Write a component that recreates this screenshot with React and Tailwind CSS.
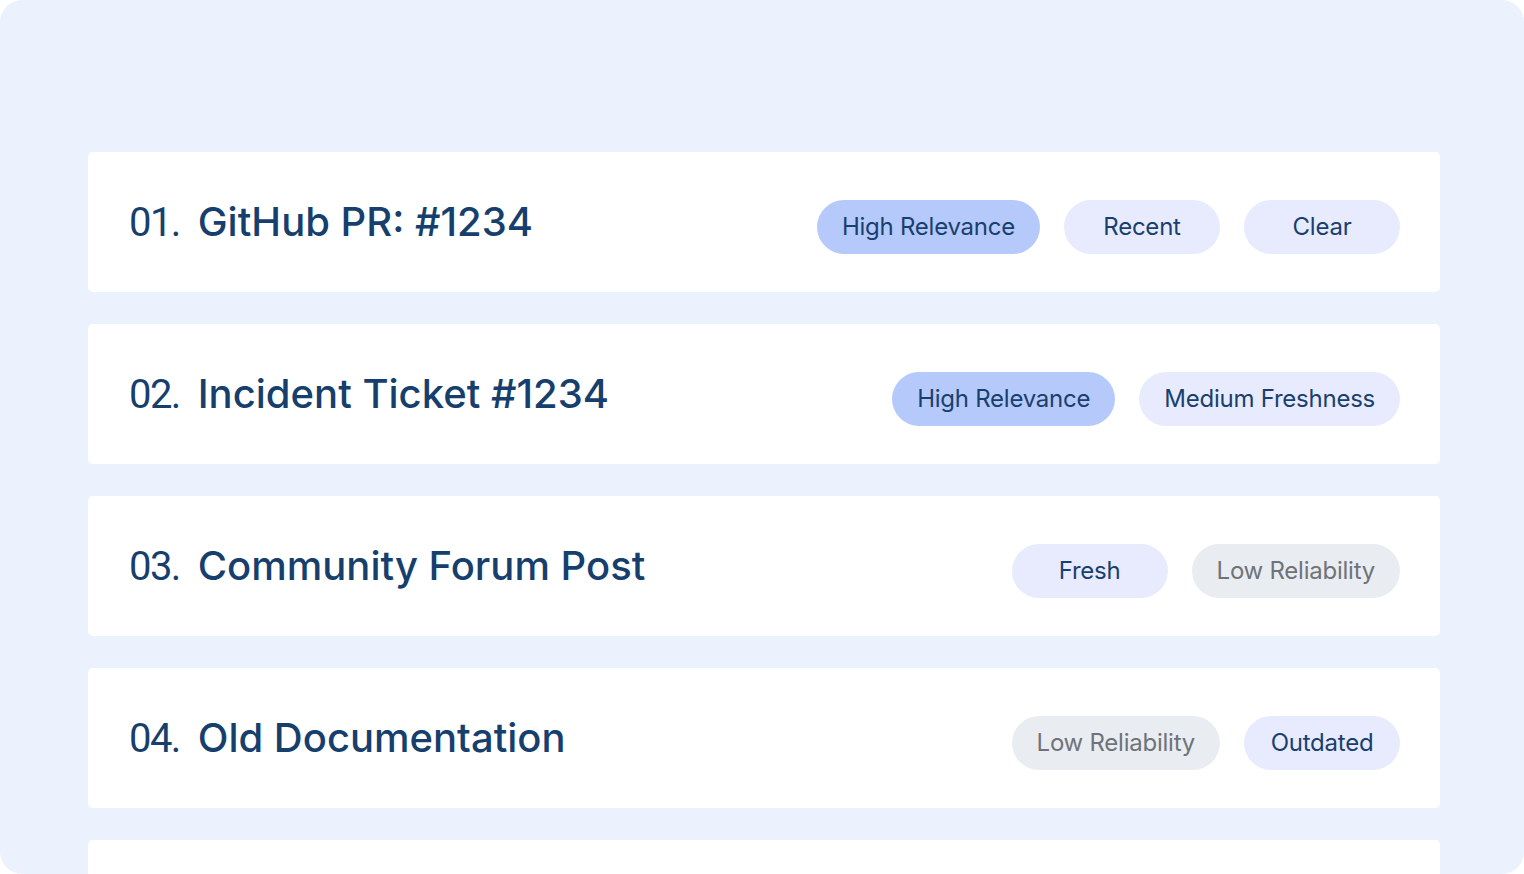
import React from "react";

const rows = [
  { n: "01.", title: "GitHub PR: #1234", tags: [["High Relevance", "strong"], ["Recent", "soft"], ["Clear", "soft"]] },
  { n: "02.", title: "Incident Ticket #1234", tags: [["High Relevance", "strong"], ["Medium Freshness", "soft"]] },
  { n: "03.", title: "Community Forum Post", tags: [["Fresh", "soft"], ["Low Reliability", "gray"]] },
  { n: "04.", title: "Old Documentation", tags: [["Low Reliability", "gray"], ["Outdated", "soft"]] },
];

function Tag({ label, kind }) {
  const cls =
    kind === "strong"
      ? "bg-[#b6c9fb] text-[#193f6f]"
      : kind === "soft"
      ? "bg-[#e7ebfd] text-[#193f6f]"
      : "bg-[#e9ecf1] text-[#6e7379]";
  return (
    <span
      className={`${cls} inline-flex h-[54px] min-w-[156px] items-center justify-center rounded-full px-[25px] text-[24px] tracking-[-0.01em]`}
    >
      {label}
    </span>
  );
}

export default function App() {
  return (
    <div className="h-[874px] w-full overflow-hidden bg-white" style={{ fontFamily: "Inter, 'Noto Sans', sans-serif" }}>
      <div className="flex h-full flex-col gap-8 overflow-hidden rounded-[22px] bg-[#ecf2fd] pl-[88px] pr-[84px] pt-[152px]">
        {rows.map((r) => (
          <div key={r.n} className="flex h-[140px] shrink-0 items-center justify-between rounded-[5px] bg-white pl-[41px] pr-10">
            <div className="flex items-baseline leading-none text-[#173f6d]">
              <span className="mr-[18px] text-[40px] tracking-[-0.04em]" style={{ fontFamily: "Roboto, sans-serif" }}>{r.n}</span>
              <span className="text-[40px] font-medium">{r.title}</span>
            </div>
            <div className="flex items-center gap-6 pt-[10px]">
              {r.tags.map(([l, k]) => (
                <Tag key={l} label={l} kind={k} />
              ))}
            </div>
          </div>
        ))}
        <div className="h-[140px] shrink-0 rounded-[5px] bg-white" />
      </div>
    </div>
  );
}
